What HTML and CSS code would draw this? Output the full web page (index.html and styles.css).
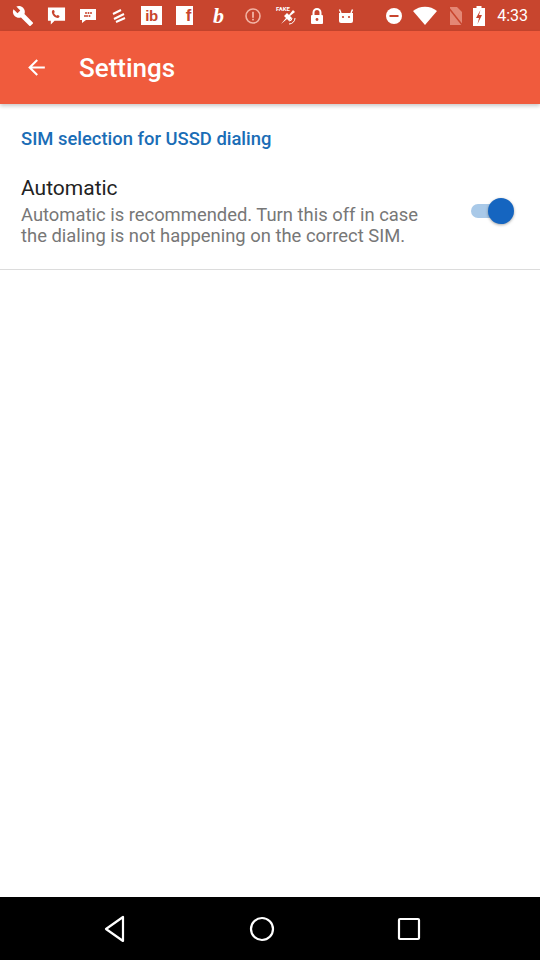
FILE: index.html
```html
<!DOCTYPE html>
<html>
<head>
<meta charset="utf-8">
<link rel="stylesheet" href="styles.css">
</head>
<body>
<div class="screen">
  <div class="statusbar">
    <div class="sb-left">
      <svg class="ic" width="22" height="22" viewBox="0 0 24 24"><path fill="#fff" d="M22.7 19l-9.1-9.1c.9-2.3.4-5-1.5-6.9-2-2-5-2.4-7.4-1.3L9 6 6 9 1.6 4.7C.4 7.1.9 10.1 2.9 12.1c1.9 1.9 4.6 2.4 6.9 1.5l9.1 9.1c.4.4 1 .4 1.4 0l2.3-2.3c.5-.4.5-1.1.1-1.4z"/></svg>
      <svg class="ic" width="19" height="20" viewBox="0 0 20 20"><path fill="#fff" d="M1 1h18v14H8l-4 4v-4H1z"/><path fill="#c8452e" d="M6 4c1-.5 1.5 0 2 1.2.3.8-.2 1.2-.7 1.5.5 1.3 1.6 2.5 3 3.1.3-.5.8-1 1.5-.7 1.2.5 1.7 1 1.2 2-.6 1.1-2 1.4-3.6.6C7.2 10.5 5.5 8.3 5.2 6.5 5 5.3 5.3 4.4 6 4z"/></svg>
      <svg class="ic" width="18" height="18" viewBox="0 0 18 18"><path fill="#fff" d="M1 2h16v11H7l-4 3v-3H1z"/><g fill="#c8452e"><circle cx="7" cy="6" r="1"/><circle cx="9.5" cy="6" r="1"/><circle cx="12" cy="6" r="1"/><circle cx="8" cy="9" r="1"/><circle cx="10.5" cy="9" r="1"/><circle cx="6" cy="9" r="1"/></g></svg>
      <svg class="ic" width="18" height="18" viewBox="0 0 18 18"><path fill="none" stroke="#fff" stroke-width="2" d="M3 7l8-4M4 12l10-5M6 15l9-4"/></svg>
      <span class="box ib">ib</span>
      <span class="box f">f</span>
      <span class="bee">b</span>
      <svg class="ic" width="18" height="18" viewBox="0 0 18 18"><circle cx="9" cy="9" r="7" fill="none" stroke="#f2b3a4" stroke-width="1.6"/><rect x="8.1" y="4.8" width="1.8" height="6" fill="#f2b3a4"/><rect x="8.1" y="11.8" width="1.8" height="1.6" fill="#f2b3a4"/></svg>
      <svg class="ic" width="22" height="24" viewBox="0 0 22 24"><text x="1" y="7" font-size="6" font-weight="bold" fill="#fff" font-family="Roboto">FAKE</text><path fill="#fff" d="M6 20l5-6-2-2 3-3 2 2 4-5 2 2-5 4 2 2-3 3-2-2-6 5z"/><path fill="none" stroke="#fff" stroke-width="1" d="M14 17a3 3 0 0 0 3-3M14 20a6 6 0 0 0 6-6"/></svg>
      <svg class="ic" width="14" height="18" viewBox="0 0 14 18"><path fill="none" stroke="#fff" stroke-width="2" d="M3.5 8V5.5a3.5 3.5 0 0 1 7 0V8"/><rect x="1" y="8" width="12" height="9" rx="1" fill="#fff"/><circle cx="7" cy="12.5" r="1.4" fill="#c8452e"/></svg>
      <svg class="ic" width="18" height="18" viewBox="0 0 18 18"><path fill="#fff" d="M2 6h14v8a2 2 0 0 1-2 2H4a2 2 0 0 1-2-2z"/><path fill="#fff" d="M4 6L2.5 2.5M14 6l1.5-3.5" stroke="#fff" stroke-width="1.4"/><circle cx="6" cy="10" r="1.1" fill="#c8452e"/><circle cx="12" cy="10" r="1.1" fill="#c8452e"/></svg>
    </div>
    <div class="sb-right">
      <svg class="ic" width="18" height="18" viewBox="0 0 18 18"><circle cx="9" cy="9" r="8" fill="#fff"/><rect x="4.5" y="8" width="9" height="2" fill="#c8452e"/></svg>
      <svg class="ic" width="26" height="20" viewBox="0 0 26 20"><path fill="#fff" d="M13 19L1 5a19 19 0 0 1 24 0z"/></svg>
      <svg class="ic" width="16" height="20" viewBox="0 0 16 20"><path fill="#e48775" d="M3 1h7l5 5v13H3z"/><path stroke="#c8452e" stroke-width="1.5" d="M1 1l15 19"/></svg>
      <svg class="ic" width="14" height="22" viewBox="0 0 14 22"><rect x="4.5" y="1" width="5" height="2" fill="#fff"/><rect x="1" y="3" width="12" height="18" fill="#fff"/><path fill="#c8452e" d="M8.5 5L4 13h3l-1.5 6L10 10H7z"/></svg>
      <span class="time">4:33</span>
    </div>
  </div>
  <div class="appbar">
    <svg class="back" width="25" height="25" viewBox="0 0 24 24"><path fill="#fff" d="M20 11H7.83l5.59-5.59L12 4l-8 8 8 8 1.41-1.41L7.83 13H20v-2z"/></svg>
    <span class="title">Settings</span>
  </div>
  <div class="content">
    <div class="section-title">SIM selection for USSD dialing</div>
    <div class="pref">
      <div class="pref-text">
        <div class="pref-title">Automatic</div>
        <div class="pref-summary">Automatic is recommended. Turn this off in case the dialing is not happening on the correct SIM.</div>
      </div>
      <div class="switch"><div class="track"></div><div class="thumb"></div></div>
    </div>
    <div class="divider"></div>
  </div>
  <div class="navbar">
    <svg width="22" height="28" viewBox="0 0 22 28"><path fill="none" stroke="#fff" stroke-width="2.2" stroke-linejoin="round" d="M19 2v24L2 14z"/></svg>
    <svg width="26" height="26" viewBox="0 0 26 26"><circle cx="13" cy="13" r="11" fill="none" stroke="#fff" stroke-width="2.2"/></svg>
    <svg width="24" height="24" viewBox="0 0 24 24"><rect x="2" y="2" width="20" height="20" rx="1" fill="none" stroke="#fff" stroke-width="2.2"/></svg>
  </div>
</div>
</body>
</html>
```
FILE: styles.css
```css
* { box-sizing: border-box; }
html, body { margin: 0; padding: 0; }
body { width: 540px; height: 960px; background: #fff; font-family: Roboto, "Liberation Sans", sans-serif; }
.screen { width: 540px; height: 960px; display: flex; flex-direction: column; }
.statusbar {
  height: 31px; background: #c8452e; display: flex; align-items: center;
  justify-content: space-between; padding: 0 12px 0 12px; color: #fff;
}
.sb-left { display: flex; align-items: center; gap: 13px; }
.sb-right { display: flex; align-items: center; gap: 9px; }
.ic { display: block; }
.box {
  background: #fff; color: #c8452e; font-weight: bold; font-size: 15px; line-height: 19px;
  height: 19px; padding: 0 2px; letter-spacing: -0.5px; font-family: "Liberation Sans", sans-serif;
}
.box.ib { width: 21px; text-align: center; }
.box.f { width: 17px; text-align: right; padding: 0 2px 0 0; font-size: 17px; margin-left: 1px; }
.bee { font-family: "Liberation Serif", serif; font-style: italic; font-weight: bold; font-size: 22px; line-height: 20px; margin: 0 7px; }
.time { font-size: 16px; color: #fff; margin-left: 2px; }
.appbar {
  height: 73px; background: #f05b3d; display: flex; align-items: center; padding-left: 24px;
  box-shadow: 0 2px 4px rgba(0,0,0,0.22); position: relative; z-index: 1;
}
.back { display: block; }
.title { color: #fff; font-size: 26px; font-weight: 500; margin-left: 30px; }
.content { flex: 1; }
.section-title { color: #1a6db6; font-size: 18.4px; font-weight: 500; padding: 24px 21px 0; line-height: 21px; }
.pref { display: flex; align-items: center; padding: 27px 26px 23px 21px; }
.pref-text { flex: 1; }
.pref-title { font-size: 21px; color: #222; line-height: 24px; }
.pref-summary { font-size: 18.4px; color: #777; line-height: 21px; padding-right: 30px; margin-top: 4px; }
.switch { position: relative; width: 46px; height: 28px; }
.track { position: absolute; left: 3px; top: 7px; width: 34px; height: 14px; border-radius: 7px; background: #a9c9e8; }
.thumb { position: absolute; right: 0; top: 1px; width: 26px; height: 26px; border-radius: 50%; background: #1565c0; box-shadow: 0 1px 3px rgba(0,0,0,0.35); }
.divider { height: 1px; background: #dcdcdc; }
.navbar { height: 63px; background: #000; display: flex; align-items: center; justify-content: space-between; padding: 0 119px 0 104px; }
.navbar svg { display: block; }
```
